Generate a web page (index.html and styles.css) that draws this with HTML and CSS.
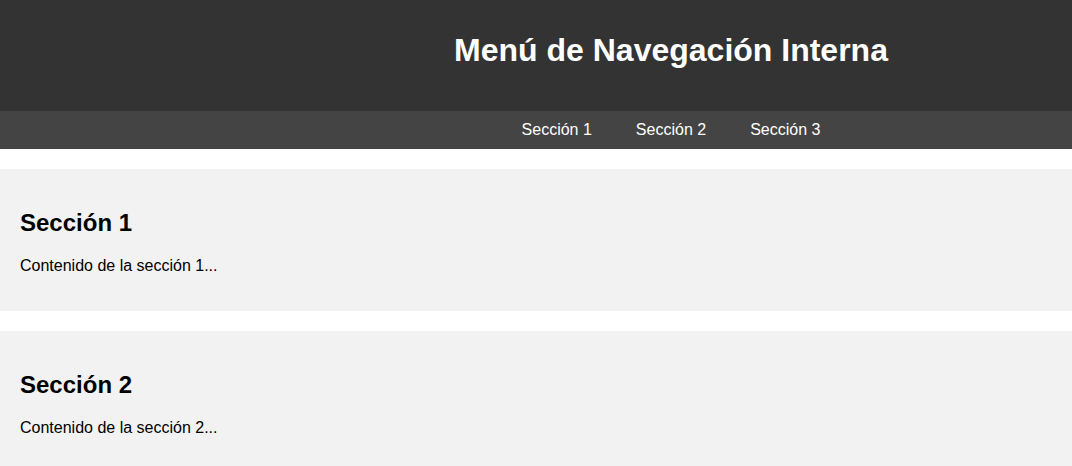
FILE: index.html
```html
<!DOCTYPE html>
<html lang="es">
<head>
<meta charset="utf-8">
<title>Menú de Navegación Interna</title>
<link rel="stylesheet" href="styles.css">
</head>
<body>
<header class="site-header">
  <h1 class="site-title">Menú de Navegación Interna</h1>
</header>
<nav class="site-nav">
  <a class="nav-link" href="#seccion1">Sección 1</a>
  <a class="nav-link" href="#seccion2">Sección 2</a>
  <a class="nav-link" href="#seccion3">Sección 3</a>
</nav>
<main class="content">
  <section class="section" id="seccion1">
    <h2 class="section-title">Sección 1</h2>
    <p class="section-text">Contenido de la sección 1...</p>
  </section>
  <section class="section" id="seccion2">
    <h2 class="section-title">Sección 2</h2>
    <p class="section-text">Contenido de la sección 2...</p>
  </section>
  <section class="section" id="seccion3">
    <h2 class="section-title">Sección 3</h2>
    <p class="section-text">Contenido de la sección 3...</p>
  </section>
</main>
</body>
</html>
```

FILE: styles.css
```css
html, body {
  margin: 0;
  padding: 0;
}
body {
  font-family: "Liberation Sans", Arial, sans-serif;
  color: #000;
  background: #fff;
}
.site-header {
  background: #333;
  color: #fff;
  height: 111px;
  box-sizing: border-box;
  padding: 32px 0 0 270px;
  text-align: center;
}
.site-title {
  margin: 0;
  font-size: 32px;
  line-height: 37px;
  font-weight: bold;
}
.site-nav {
  background: #444;
  display: flex;
  justify-content: center;
  gap: 44px;
  padding: 10px 0 10px 270px;
  height: 38px;
  box-sizing: border-box;
}
.nav-link {
  color: #fff;
  text-decoration: none;
  font-size: 16px;
  line-height: 18px;
}
.content {
  display: flex;
  flex-direction: column;
  gap: 20px;
  padding-top: 20px;
}
.section {
  background: #f2f2f2;
  padding: 20px;
}
.section-title {
  margin: 20px 0;
  font-size: 24px;
  line-height: 28px;
  font-weight: bold;
}
.section-text {
  margin: 0 0 16px;
  font-size: 16px;
  line-height: 18px;
}
```
